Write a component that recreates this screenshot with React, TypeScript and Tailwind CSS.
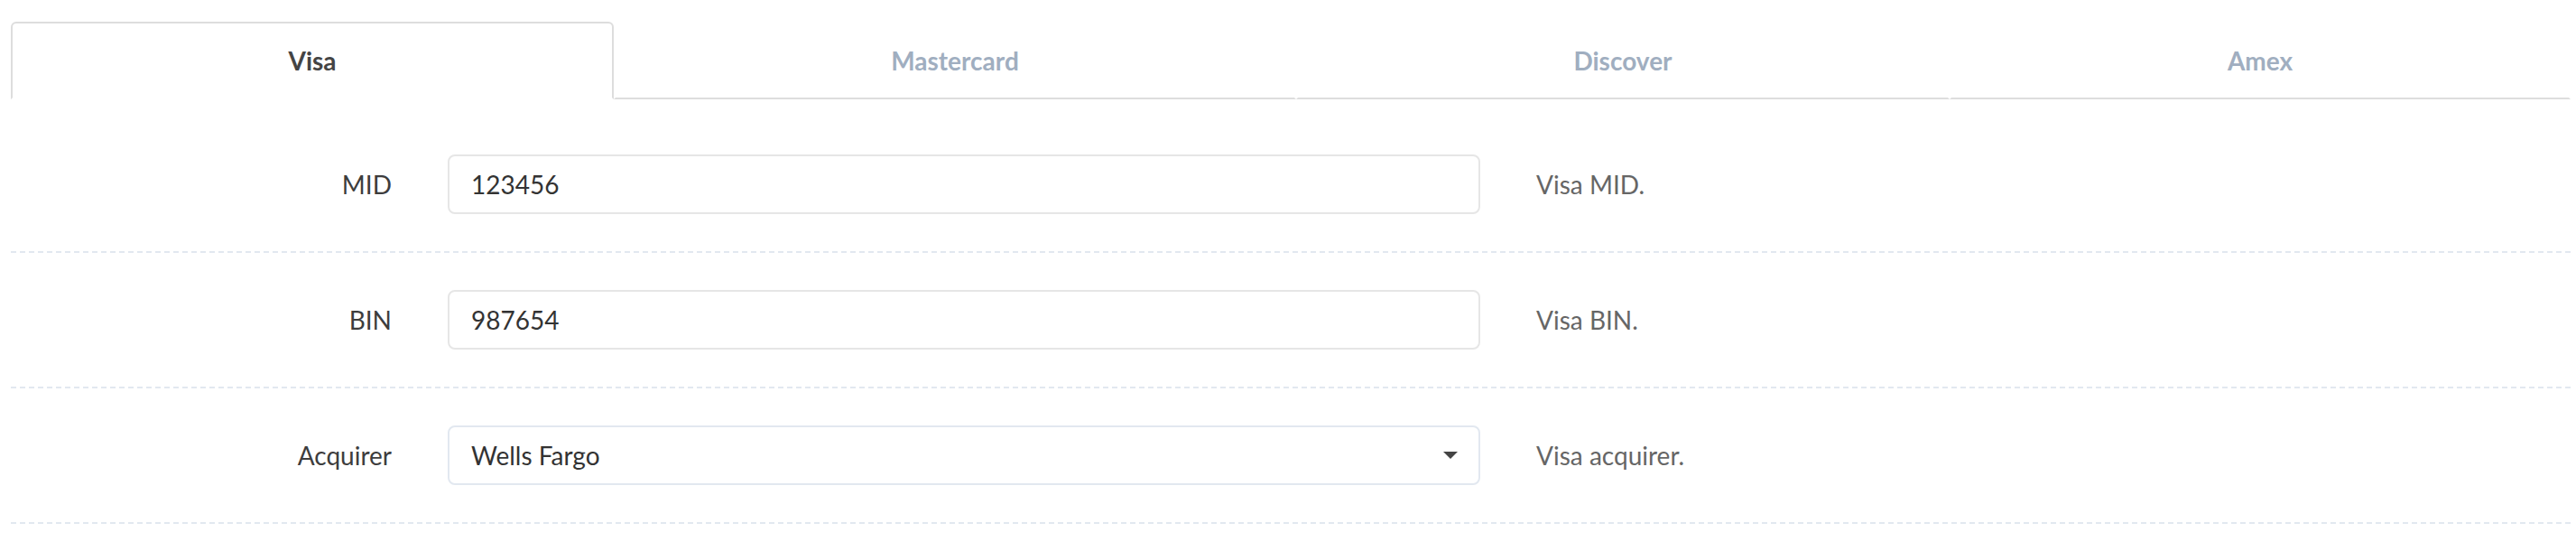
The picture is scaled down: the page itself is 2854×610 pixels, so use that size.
import { useState } from "react";

type Field = {
  label: string;
  value: string;
  help: string;
  options?: string[];
};

const TABS = [
  { name: "Visa", width: "w-[668px]" },
  { name: "Mastercard", width: "w-[756px]" },
  { name: "Discover", width: "w-[724px]" },
  { name: "Amex", width: "w-[688px]" },
];

const FIELDS: Field[] = [
  { label: "MID", value: "123456", help: "Visa MID." },
  { label: "BIN", value: "987654", help: "Visa BIN." },
  {
    label: "Acquirer",
    value: "Wells Fargo",
    help: "Visa acquirer.",
    options: ["Wells Fargo", "Chase", "Elavon", "Fiserv"],
  },
];

const FieldRow = ({ field }: { field: Field }) => (
  <div className="flex items-center py-[41px] border-b-2 border-dashed border-[#e2e8f0]">
    <label className="w-[422px] text-right text-[28px] leading-[36px] text-[#3d3d3d]">
      {field.label}
    </label>

    {field.options ? (
      <div className="relative ml-[62px] w-[1144px]">
        <select
          defaultValue={field.value}
          className="w-full h-[66px] appearance-none bg-white border-2 border-[#e2e8f0] rounded-[8px] px-[24px] text-[28px] text-[#333] outline-none"
        >
          {field.options.map((o) => (
            <option key={o}>{o}</option>
          ))}
        </select>
        {/* caret */}
        <svg
          className="absolute right-[25px] top-[29px] pointer-events-none"
          width="16"
          height="8"
          viewBox="0 0 16 8"
        >
          <path d="M0 0 L16 0 L8 8 Z" fill="#444" />
        </svg>
      </div>
    ) : (
      <input
        defaultValue={field.value}
        className="ml-[62px] w-[1144px] h-[66px] bg-white border-2 border-[#e6e6e6] rounded-[8px] px-[24px] text-[28px] text-[#333] outline-none"
      />
    )}

    <span className="ml-[62px] text-[28px] leading-[36px] text-[#666]">{field.help}</span>
  </div>
);

export default function App() {
  const [active, setActive] = useState("Visa");

  return (
    <div className="min-h-screen bg-white font-['Lato',sans-serif] pl-[12px] pr-[6px] pt-[24px]">
      <div className="flex">
        {TABS.map((t) =>
          t.name === active ? (
            <button
              key={t.name}
              onClick={() => setActive(t.name)}
              className={`${t.width} h-[86px] flex items-center justify-center border-2 border-[#ddd] border-b-transparent rounded-t-[6px] bg-white text-[28px] font-bold text-[#444]`}
            >
              {t.name}
            </button>
          ) : (
            <button
              key={t.name}
              onClick={() => setActive(t.name)}
              className={`${t.width} h-[86px] flex items-center justify-center border-2 border-transparent border-b-[#ddd] text-[28px] font-bold text-[#a0aec0]`}
            >
              {t.name}
            </button>
          )
        )}
      </div>

      <div className="pt-[20px]">
        {FIELDS.map((f) => (
          <FieldRow key={f.label} field={f} />
        ))}
      </div>
    </div>
  );
}
